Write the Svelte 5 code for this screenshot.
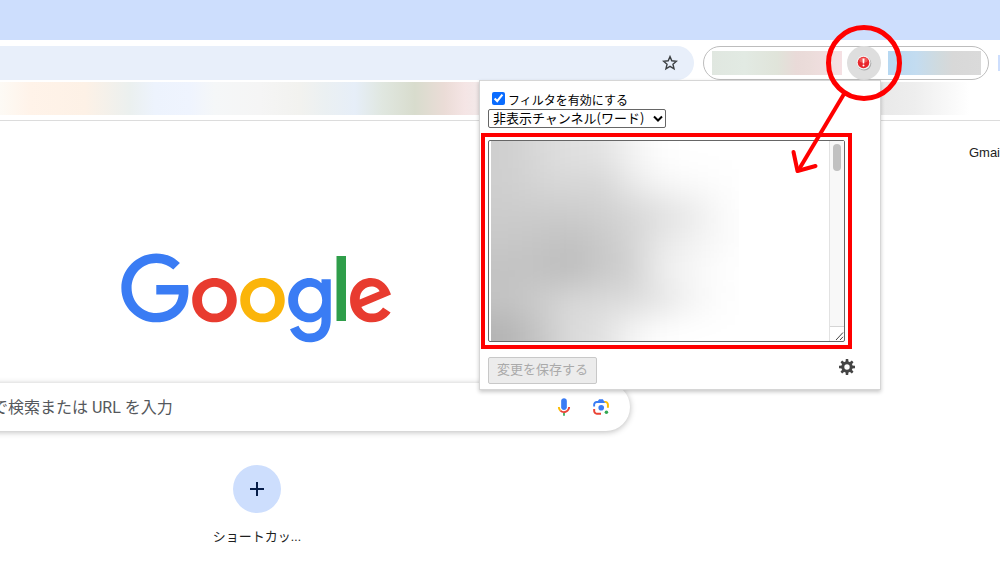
<script>
  let enabled = $state(true);
  let words = $state('');
  // Grey levels of the redacted word list, row by row.
  const shades = [
    ['cf', 'd8', 'e0', 'e2', 'f2', 'fe', 'ff', 'ff'],
    ['cf', 'd5', 'd8', 'd5', 'e8', 'f6', 'fa', 'fd'],
    ['cc', 'cc', 'cc', 'd0', 'd6', 'df', 'ea', 'fa'],
    ['c8', 'c5', 'c1', 'c8', 'd4', 'e8', 'f2', 'fa'],
    ['c2', 'c2', 'bc', 'c8', 'd0', 'ee', 'f8', 'fe'],
    ['c4', 'cc', 'd8', 'da', 'dc', 'e4', 'f4', 'fd'],
    ['b4', 'c4', 'da', 'e0', 'f4', 'fe', 'ff', 'ff']
  ];
  const cells = [];
  for (let r = -1; r <= 7; r++) {
    for (let c = -1; c <= 8; c++) {
      const v = c === 8 ? 'ff' : shades[Math.min(6, Math.max(0, r))][Math.max(0, c)];
      cells.push({ x: c * 31, y: r * 29, fill: `#${v}${v}${v}` });
    }
  }
  const teeth = [0, 45, 90, 135, 180, 225, 270, 315];
</script>

<div class="browser">
  <header>
    <div class="tabs"></div>
    <div class="toolbar">
      <div class="address">
        <button class="plain star" aria-label="ブックマーク">
          <svg width="16" height="16" viewBox="0 0 16 16"><path d="M8 1.600l1.800 4.200 4.700.4-3.550 3.050 1.080 4.500L8 11.300l-4.030 2.450 1.080-4.500L1.500 6.200l4.700-.4z" fill="none" stroke="#3c4043" stroke-width="1.400" /></svg>
        </button>
      </div>
      <div class="extensions">
        <div class="hidden-a"></div>
        <button class="plain ext" aria-label="フィルタ">
          <svg width="16" height="16" viewBox="0 0 16 16">
            <circle cx="8.300" cy="8.500" r="7" fill="#aaa" />
            <circle cx="7.600" cy="7.600" r="6.900" fill="#f5f5f5" />
            <circle cx="7.500" cy="7.500" r="5.800" fill="#e8262c" />
            <ellipse cx="7.500" cy="5" rx="4.200" ry="2.600" fill="#f05a5a" />
            <path d="M6.500 3.500h2l-.3 5H6.800z" fill="#fff" /><circle cx="7.500" cy="10.500" r="1" fill="#fff" />
          </svg>
        </button>
        <div class="hidden-b"></div>
      </div>
      <div class="edge"></div>
    </div>
    <div class="bookmarks"></div>
  </header>

  <main>
    <nav><a href="#mail">Gmai</a></nav>
    <div class="column">
      <svg class="logo" width="272" height="92" viewBox="0 0 272 92" role="img" aria-label="Google">
        <path fill="#e83b2f" d="M115.75 47.18c0 12.77-9.99 22.18-22.25 22.18s-22.25-9.41-22.25-22.18C71.25 34.32 81.24 25 93.5 25s22.25 9.32 22.25 22.18zm-9.74 0c0-7.98-5.79-13.44-12.51-13.44S80.99 39.2 80.99 47.18c0 7.9 5.79 13.44 12.51 13.44s12.51-5.55 12.51-13.44z" />
        <path fill="#fbb50a" d="M163.75 47.18c0 12.77-9.99 22.18-22.25 22.18s-22.25-9.41-22.25-22.18c0-12.85 9.99-22.18 22.25-22.18s22.25 9.32 22.25 22.18zm-9.74 0c0-7.98-5.79-13.44-12.51-13.44s-12.51 5.46-12.51 13.44c0 7.9 5.79 13.44 12.51 13.44s12.51-5.55 12.51-13.44z" />
        <path fill="#3a7cf4" d="M209.75 26.34v39.82c0 16.38-9.66 23.07-21.08 23.07-10.75 0-17.22-7.19-19.66-13.07l8.48-3.53c1.51 3.61 5.21 7.87 11.17 7.87 7.31 0 11.84-4.51 11.84-13v-3.19h-.34c-2.18 2.69-6.38 5.04-11.68 5.04-11.09 0-21.25-9.66-21.25-22.09 0-12.52 10.16-22.26 21.25-22.26 5.29 0 9.49 2.35 11.68 4.96h.34v-3.61h9.25zm-8.56 20.92c0-7.81-5.21-13.52-11.84-13.52-6.72 0-12.35 5.71-12.35 13.52 0 7.73 5.63 13.36 12.35 13.36 6.63 0 11.84-5.63 11.84-13.36z" />
        <path fill="#2f9e4a" d="M225 3v65h-9.5V3h9.5z" />
        <path fill="#e83b2f" d="M262.02 54.48l7.56 5.04c-2.44 3.61-8.32 9.83-18.48 9.83-12.6 0-22.01-9.74-22.01-22.18 0-13.19 9.49-22.18 20.92-22.18 11.51 0 17.14 9.16 18.98 14.11l1.01 2.52-29.65 12.28c2.27 4.45 5.8 6.72 10.75 6.72 4.96 0 8.4-2.44 10.92-6.14zm-23.27-7.98l19.82-8.23c-1.09-2.77-4.37-4.7-8.23-4.7-4.95 0-11.84 4.37-11.59 12.93z" />
        <path fill="#3a7cf4" d="M35.29 41.41V32H67c.31 1.64.47 3.58.47 5.68 0 7.06-1.93 15.79-8.15 22.01-6.05 6.3-13.78 9.66-24.02 9.66C16.32 69.35.36 53.89.36 34.91.36 15.93 16.32.47 35.3.47c10.5 0 17.98 4.12 23.6 9.49l-6.64 6.64c-4.03-3.78-9.49-6.72-16.97-6.72-13.86 0-24.7 11.17-24.7 25.03 0 13.86 10.84 25.03 24.7 25.03 8.99 0 14.11-3.61 17.39-6.89 2.66-2.66 4.41-6.46 5.1-11.65l-22.49.01z" />
      </svg>
    </div>
    <form class="search">
      <input type="text" placeholder="で検索または URL を入力" aria-label="検索" />
      <button type="button" class="plain" aria-label="音声検索">
        <svg width="20" height="20" viewBox="0 0 24 24">
          <path fill="#3a7cf4" d="M12 15.500c1.900 0 3.400-1.500 3.400-3.300V4.700C15.400 2.900 13.900 1.500 12 1.500S8.600 2.900 8.600 4.700v7.500c0 1.800 1.500 3.300 3.400 3.300z" />
          <path fill="#34a853" d="M11 18.900h2V22.500h-2z" />
          <path fill="#fbbc04" d="M7 12H4.700c0 1.930.78 3.680 2.200 5.100l1.560-1.560C7.560 14.630 7 13.380 7 12z" />
          <path fill="#ea4335" d="M12 17c-1.400 0-2.600-.560-3.540-1.470L6.900 17.100A7.100 7.100 0 0 0 12 19.200c3.860 0 7.300-3.200 7.300-7.200H17c0 2.760-2.230 5-5 5z" />
        </svg>
      </button>
      <button type="button" class="plain" aria-label="画像検索">
        <svg width="20" height="20" viewBox="0 0 192 192">
          <circle fill="#34a853" cx="148" cy="146" r="17" />
          <circle fill="#3a7cf4" cx="98" cy="103" r="27" />
          <path fill="#ea4335" d="M21 135.200c0 18.110 14.690 34.800 34.800 34.800H96v-18l-38.100-.1c-8.800 0-17.900-8.190-17.900-17.900v-18H21v19.200z" />
          <path fill="#fbbc04" d="M172 72.800c0-18.110-16.690-34.800-34.800-34.800H116l20 18c8.800 0 17 8.290 17 18v30h19V72.800z" />
          <path fill="#3a7cf4" d="M114 21H78L66 38H54.800C36.690 38 21 54.690 21 72.800V92h18V76c0-9.710 7.200-19 17-19h80l-22-36z" />
        </svg>
      </button>
    </form>
    <div class="column">
      <a class="shortcut" href="#add">
        <span class="disc"><svg width="14" height="14" viewBox="0 0 14 14"><path d="M7 0v14M0 7h14" stroke="#061d49" stroke-width="2" /></svg></span>
        <span>ショートカッ...</span>
      </a>
    </div>
  </main>

  <section class="popup" aria-label="フィルタ設定">
    <div class="enable">
      <input id="enable" type="checkbox" bind:checked={enabled} />
      <label for="enable">フィルタを有効にする</label>
    </div>
    <div class="picker">
      <select aria-label="フィルタの種類"><option>非表示チャンネル(ワード)</option></select>
      <svg width="10" height="8" viewBox="0 0 10 8" aria-hidden="true"><path d="M1 1.500l4 4 4-4" fill="none" stroke="#000" stroke-width="2" /></svg>
    </div>
    <div class="frame">
      <div class="editor">
        <svg class="smudge" width="248" height="200" viewBox="0 0 248 200" aria-hidden="true">
          <defs><filter id="soft" x="-20%" y="-20%" width="140%" height="140%" color-interpolation-filters="sRGB"><feGaussianBlur stdDeviation="15" /></filter></defs>
          <g filter="url(#soft)">
            {#each cells as c}
              <rect x={c.x < 0 ? -91 : c.x} y={c.y < 0 ? -89 : c.y} width={c.x < 0 || c.x > 220 ? 92 : 32} height={c.y < 0 || c.y > 180 ? 90 : 30} fill={c.fill} />
            {/each}
          </g>
        </svg>
        <textarea aria-label="非表示ワード" bind:value={words}></textarea>
        <div class="scroll" aria-hidden="true">
          <div class="track"><div class="thumb"></div></div>
          <svg width="14" height="14" viewBox="0 0 14 14"><path d="M6 13L13 5.500M10 13L13 9.800" stroke="#444" fill="none" /></svg>
        </div>
      </div>
    </div>
    <div class="actions">
      <button class="save" disabled>変更を保存する</button>
      <button class="plain" aria-label="設定">
        <svg width="16" height="16" viewBox="-8 -8 16 16">
          {#each teeth as t}
            <path d="M-1.500 -4.500L-1.200 -8H1.200L1.500 -4.500z" fill="#444" transform="rotate({t})" />
          {/each}
          <circle r="4.200" fill="none" stroke="#444" stroke-width="3" />
        </svg>
      </button>
    </div>
    <svg class="mark" width="124" height="160" viewBox="784 20 124 160" fill="none" stroke="#f00" aria-hidden="true">
      <circle cx="864" cy="63" r="35.500" stroke-width="5" />
      <path d="M844 94L798 171" stroke-width="4" />
      <path d="M793.500 152L797.500 171L815.500 166" stroke-width="4" stroke-linecap="round" stroke-linejoin="round" />
    </svg>
  </section>
</div>

<style>
  :global(body) { margin: 0; background: #fff; }
  .browser {
    position: relative;
    min-height: 100vh;
    overflow: hidden;
    font-family: Roboto, "Noto Sans CJK JP", sans-serif;
    color: #1f1f1f;
  }
  .browser * { box-sizing: border-box; }
  svg { display: block; }
  .plain { display: flex; align-items: center; justify-content: center; padding: 0; border: 0; background: none; }
  header { border-bottom: 1px solid #dcdcdc; }
  .tabs { height: 40px; background: #cddefd; }
  .toolbar { display: flex; padding-top: 6px; }
  .address {
    flex: 1;
    display: flex;
    justify-content: flex-end;
    align-items: center;
    height: 34px;
    padding-right: 16px;
    border-radius: 0 17px 17px 0;
    background: #e8effa;
  }
  .extensions {
    display: flex;
    align-items: center;
    width: 286px;
    height: 34px;
    margin: 0 9px;
    padding: 0 7px 0 8px;
    border: 1px solid #bdbdbd;
    border-radius: 17px;
  }
  .hidden-a { flex: 1; height: 24px; background: linear-gradient(90deg, #e0e7e0, #e2eae3 25%, #e0e4da 50%, #e9dad8 65%, #ebdcda 75%, #f5e0e3); }
  .hidden-b { width: 93px; height: 24px; background: linear-gradient(90deg, #b6d8f2, #c3dcf0 30%, #d0dade 55%, #d8d8d8 70%, #dadada); }
  .ext { width: 34px; height: 34px; margin: 0 7px 0 5px; border-radius: 50%; background: #dedede; }
  .edge { width: 2px; height: 16px; margin-top: 9px; background: #cddefd; }
  .bookmarks {
    height: 33px;
    margin: 2px 0 5px;
    background: linear-gradient(90deg, #fdfaf5 0, #fff3e9 30px, #fdf1e6 85px, #ebf0ef 130px, #edf3fd 155px, #eff4fe 190px, #f5f7f8 215px, #f5f5f5 260px, #f2f2ef 300px, #ebf0f2 325px, #e6eef8 355px, #e0e7e0 382px, #d8dccd 415px, #ebdcd7 445px, #f5e5e5 465px, #eee 500px, #e9e9e9 880px, #eee 915px, #fff 970px);
  }
  main { display: flex; flex-direction: column; }
  nav { display: flex; justify-content: flex-end; padding-top: 24px; font: 13px/16px "Liberation Sans", sans-serif; }
  nav a { color: #222; text-decoration: none; }
  .column { display: flex; justify-content: center; width: 514px; }
  .logo { margin-top: 92px; }
  .search {
    display: flex;
    align-items: center;
    gap: 17px;
    width: calc(63% + 16px);
    height: 48px;
    margin: 38px 0 34px -16px;
    padding: 0 19px 0 8px;
    border-radius: 0 24px 24px 0;
    box-shadow: 0 1px 6px rgba(0, 0, 0, .28);
  }
  .search input {
    flex: 1;
    min-width: 0;
    padding: 2px 0 0;
    border: 0;
    outline: 0;
    background: none;
    font: 16px/24px Roboto, "Noto Sans CJK JP", sans-serif;
  }
  .search input::placeholder { color: #55585c; opacity: 1; }
  .shortcut { display: flex; flex-direction: column; align-items: center; gap: 15px; color: #1f1f1f; font-size: 13px; line-height: 18px; text-decoration: none; }
  .disc { display: grid; place-items: center; width: 48px; height: 48px; border-radius: 50%; background: #cddefd; }

  .popup {
    position: absolute;
    top: 80px;
    right: 119px;
    width: 402px;
    padding: 11px 8px 5px;
    border: 1px solid #d6d6d6;
    background: #fff;
    box-shadow: 0 2px 4px rgba(0, 0, 0, .22);
    color: #000;
  }
  .enable { display: flex; gap: 3px; height: 17px; padding-left: 4px; font-size: 12px; line-height: 18px; }
  .enable input { width: 13px; height: 13px; margin: 0; accent-color: #0a6cff; }
  .picker { display: grid; align-items: center; width: 178px; }
  .picker > * { grid-area: 1 / 1; }
  .picker svg { justify-self: end; margin-right: 3px; pointer-events: none; }
  select {
    appearance: none;
    width: 100%;
    height: 19px;
    padding: 0 4px 2px;
    border: 1px solid #666;
    border-radius: 2px;
    background: #fff;
    color: #000;
    font: 13px/16px "Noto Sans CJK JP", sans-serif;
  }
  .frame { width: 371px; margin: 5px 0 8px -7px; padding: 3px; border: 4px solid #f00; }
  .editor { position: relative; height: 202px; }
  .smudge { position: absolute; left: 3px; top: 1px; overflow: hidden; }
  textarea {
    position: relative;
    display: block;
    width: 100%;
    height: 100%;
    resize: none;
    border: 1px solid #666;
    border-radius: 2px;
    background: none;
    font: 13px/18px "Noto Sans CJK JP", sans-serif;
  }
  .scroll { position: absolute; inset: 1px 1px 1px auto; display: flex; flex-direction: column; width: 15px; border-left: 1px solid #e2e2e2; }
  .track { flex: 1; padding: 3px 3px 0; border-bottom: 1px solid #d5d5d5; background: #f8f8f8; }
  .thumb { width: 8px; height: 27px; border-radius: 4px; background: #c1c1c1; }
  .actions { display: flex; justify-content: space-between; padding-right: 17px; }
  .actions .plain { height: 20px; }
  .save { height: 27px; padding: 0 7px 3px; border: 1px solid #c8c8c8; border-radius: 2px; background: #ececec; color: #aaa; width: 109px; font: 13px/20px "Noto Sans CJK JP", sans-serif; }
  .mark { position: absolute; top: -61px; right: -28px; pointer-events: none; }
</style>
